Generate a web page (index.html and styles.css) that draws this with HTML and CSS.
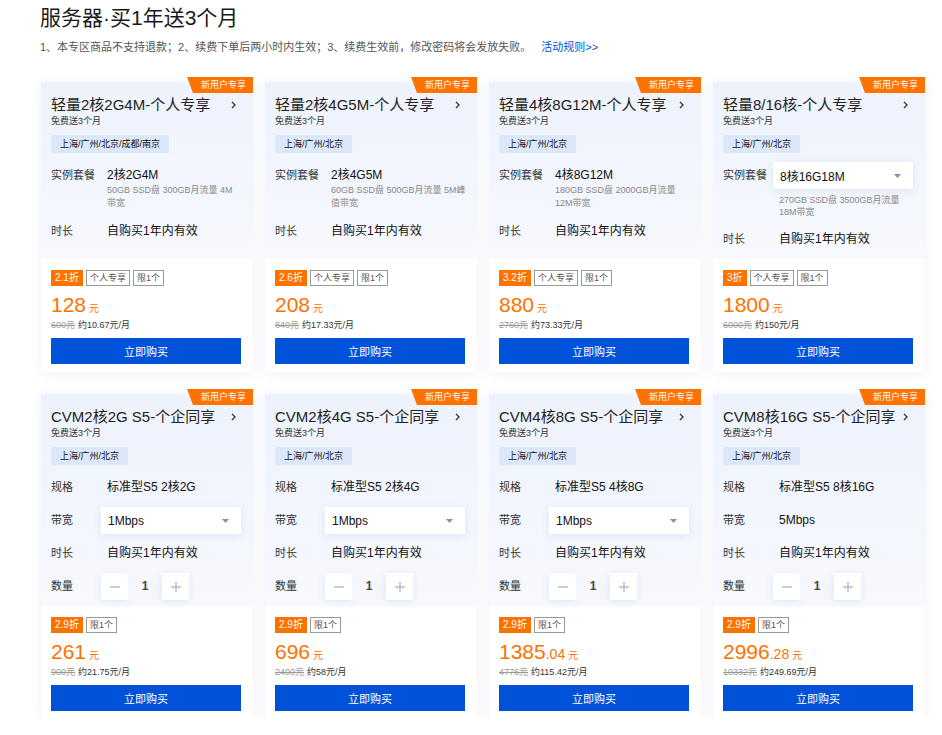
FILE: index.html
```html
<!DOCTYPE html>
<html lang="zh-CN">
<head>
  <meta charset="UTF-8" />
  <meta name="viewport" content="width=device-width, initial-scale=1.0"/>
  <title>服务器·买1年送3个月</title>
  <link rel="stylesheet" href="styles.css">
</head>
<body>

<div class="page-head">
  <h1 class="page-title">服务器·买1年送3个月</h1>
  <p class="page-tips">1、本专区商品不支持退款；2、续费下单后两小时内生效；3、续费生效前，修改密码将会发放失败。<a href="#">活动规则&gt;&gt;</a></p>
</div>

<div class="card-list">
  <!-- 轻量 -->
  <div class="card">
    <span class="badge">新用户专享</span>
    <div class="card-top">
      <div class="card-title">
        <h3>轻量2核2G4M-个人专享</h3>
        <svg class="chevron" width="5" height="8" viewBox="0 0 5 8"><path d="M1 1l3 3-3 3" fill="none" stroke="#333" stroke-width="1.3"/></svg>
      </div>
      <div class="card-sub">免费送3个月</div>
      <span class="region">上海/广州/北京/成都/南京</span>
      <div class="spec-list">
        <div class="spec-row">
          <span class="spec-label">实例套餐</span>
          <div class="spec-value">
            <div class="spec-text">2核2G4M</div>
            <div class="spec-desc">50GB SSD盘 300GB月流量 4M 带宽</div>
          </div>
        </div>
        <div class="spec-row">
          <span class="spec-label">时长</span>
          <div class="spec-value"><div class="spec-text">自购买1年内有效</div></div>
        </div>
      </div>
    </div>
    <div class="card-bottom">
      <div class="tags"><span class="tag tag-off">2.1折</span><span class="tag">个人专享</span><span class="tag">限1个</span></div>
      <div class="price">128<span class="unit">元</span></div>
      <div class="price-orig"><del>600元</del>约10.67元/月</div>
      <button type="button" class="buy-btn">立即购买</button>
    </div>
  </div>

  <div class="card">
    <span class="badge">新用户专享</span>
    <div class="card-top">
      <div class="card-title">
        <h3>轻量2核4G5M-个人专享</h3>
        <svg class="chevron" width="5" height="8" viewBox="0 0 5 8"><path d="M1 1l3 3-3 3" fill="none" stroke="#333" stroke-width="1.3"/></svg>
      </div>
      <div class="card-sub">免费送3个月</div>
      <span class="region">上海/广州/北京</span>
      <div class="spec-list">
        <div class="spec-row">
          <span class="spec-label">实例套餐</span>
          <div class="spec-value">
            <div class="spec-text">2核4G5M</div>
            <div class="spec-desc">60GB SSD盘 500GB月流量 5M峰值带宽</div>
          </div>
        </div>
        <div class="spec-row">
          <span class="spec-label">时长</span>
          <div class="spec-value"><div class="spec-text">自购买1年内有效</div></div>
        </div>
      </div>
    </div>
    <div class="card-bottom">
      <div class="tags"><span class="tag tag-off">2.6折</span><span class="tag">个人专享</span><span class="tag">限1个</span></div>
      <div class="price">208<span class="unit">元</span></div>
      <div class="price-orig"><del>840元</del>约17.33元/月</div>
      <button type="button" class="buy-btn">立即购买</button>
    </div>
  </div>

  <div class="card">
    <span class="badge">新用户专享</span>
    <div class="card-top">
      <div class="card-title">
        <h3>轻量4核8G12M-个人专享</h3>
        <svg class="chevron" width="5" height="8" viewBox="0 0 5 8"><path d="M1 1l3 3-3 3" fill="none" stroke="#333" stroke-width="1.3"/></svg>
      </div>
      <div class="card-sub">免费送3个月</div>
      <span class="region">上海/广州/北京</span>
      <div class="spec-list">
        <div class="spec-row">
          <span class="spec-label">实例套餐</span>
          <div class="spec-value">
            <div class="spec-text">4核8G12M</div>
            <div class="spec-desc">180GB SSD盘 2000GB月流量 12M带宽</div>
          </div>
        </div>
        <div class="spec-row">
          <span class="spec-label">时长</span>
          <div class="spec-value"><div class="spec-text">自购买1年内有效</div></div>
        </div>
      </div>
    </div>
    <div class="card-bottom">
      <div class="tags"><span class="tag tag-off">3.2折</span><span class="tag">个人专享</span><span class="tag">限1个</span></div>
      <div class="price">880<span class="unit">元</span></div>
      <div class="price-orig"><del>2760元</del>约73.33元/月</div>
      <button type="button" class="buy-btn">立即购买</button>
    </div>
  </div>

  <div class="card">
    <span class="badge">新用户专享</span>
    <div class="card-top">
      <div class="card-title">
        <h3>轻量8/16核-个人专享</h3>
        <svg class="chevron" width="5" height="8" viewBox="0 0 5 8"><path d="M1 1l3 3-3 3" fill="none" stroke="#333" stroke-width="1.3"/></svg>
      </div>
      <div class="card-sub">免费送3个月</div>
      <span class="region">上海/广州/北京</span>
      <div class="spec-list">
        <div class="spec-row">
          <span class="spec-label">实例套餐</span>
          <div class="spec-value">
            <div class="select">8核16G18M<svg width="7" height="4" viewBox="0 0 7 4"><path d="M0 0h7L3.5 4z" fill="#8a909c"/></svg></div>
            <div class="spec-desc">270GB SSD盘 3500GB月流量 18M带宽</div>
          </div>
        </div>
        <div class="spec-row">
          <span class="spec-label">时长</span>
          <div class="spec-value"><div class="spec-text">自购买1年内有效</div></div>
        </div>
      </div>
    </div>
    <div class="card-bottom">
      <div class="tags"><span class="tag tag-off">3折</span><span class="tag">个人专享</span><span class="tag">限1个</span></div>
      <div class="price">1800<span class="unit">元</span></div>
      <div class="price-orig"><del>6000元</del>约150元/月</div>
      <button type="button" class="buy-btn">立即购买</button>
    </div>
  </div>

  <!-- CVM -->
  <div class="card">
    <span class="badge">新用户专享</span>
    <div class="card-top">
      <div class="card-title">
        <h3>CVM2核2G S5-个企同享</h3>
        <svg class="chevron" width="5" height="8" viewBox="0 0 5 8"><path d="M1 1l3 3-3 3" fill="none" stroke="#333" stroke-width="1.3"/></svg>
      </div>
      <div class="card-sub">免费送3个月</div>
      <span class="region">上海/广州/北京</span>
      <div class="spec-list">
        <div class="spec-row">
          <span class="spec-label">规格</span>
          <div class="spec-value"><div class="spec-text">标准型S5 2核2G</div></div>
        </div>
        <div class="spec-row">
          <span class="spec-label">带宽</span>
          <div class="spec-value">
            <div class="select">1Mbps<svg width="7" height="4" viewBox="0 0 7 4"><path d="M0 0h7L3.5 4z" fill="#8a909c"/></svg></div>
          </div>
        </div>
        <div class="spec-row">
          <span class="spec-label">时长</span>
          <div class="spec-value"><div class="spec-text">自购买1年内有效</div></div>
        </div>
        <div class="spec-row">
          <span class="spec-label">数量</span>
          <div class="spec-value">
            <div class="stepper">
              <span class="stepper-btn"><svg width="10" height="10" viewBox="0 0 10 10"><path d="M0 5h10" stroke="#b4bac6" stroke-width="1.4"/></svg></span>
              <span class="stepper-num">1</span>
              <span class="stepper-btn"><svg width="10" height="10" viewBox="0 0 10 10"><path d="M0 5h10M5 0v10" stroke="#b4bac6" stroke-width="1.4"/></svg></span>
            </div>
          </div>
        </div>
      </div>
    </div>
    <div class="card-bottom">
      <div class="tags"><span class="tag tag-off">2.9折</span><span class="tag">限1个</span></div>
      <div class="price">261<span class="unit">元</span></div>
      <div class="price-orig"><del>900元</del>约21.75元/月</div>
      <button type="button" class="buy-btn">立即购买</button>
    </div>
  </div>

  <div class="card">
    <span class="badge">新用户专享</span>
    <div class="card-top">
      <div class="card-title">
        <h3>CVM2核4G S5-个企同享</h3>
        <svg class="chevron" width="5" height="8" viewBox="0 0 5 8"><path d="M1 1l3 3-3 3" fill="none" stroke="#333" stroke-width="1.3"/></svg>
      </div>
      <div class="card-sub">免费送3个月</div>
      <span class="region">上海/广州/北京</span>
      <div class="spec-list">
        <div class="spec-row">
          <span class="spec-label">规格</span>
          <div class="spec-value"><div class="spec-text">标准型S5 2核4G</div></div>
        </div>
        <div class="spec-row">
          <span class="spec-label">带宽</span>
          <div class="spec-value">
            <div class="select">1Mbps<svg width="7" height="4" viewBox="0 0 7 4"><path d="M0 0h7L3.5 4z" fill="#8a909c"/></svg></div>
          </div>
        </div>
        <div class="spec-row">
          <span class="spec-label">时长</span>
          <div class="spec-value"><div class="spec-text">自购买1年内有效</div></div>
        </div>
        <div class="spec-row">
          <span class="spec-label">数量</span>
          <div class="spec-value">
            <div class="stepper">
              <span class="stepper-btn"><svg width="10" height="10" viewBox="0 0 10 10"><path d="M0 5h10" stroke="#b4bac6" stroke-width="1.4"/></svg></span>
              <span class="stepper-num">1</span>
              <span class="stepper-btn"><svg width="10" height="10" viewBox="0 0 10 10"><path d="M0 5h10M5 0v10" stroke="#b4bac6" stroke-width="1.4"/></svg></span>
            </div>
          </div>
        </div>
      </div>
    </div>
    <div class="card-bottom">
      <div class="tags"><span class="tag tag-off">2.9折</span><span class="tag">限1个</span></div>
      <div class="price">696<span class="unit">元</span></div>
      <div class="price-orig"><del>2400元</del>约58元/月</div>
      <button type="button" class="buy-btn">立即购买</button>
    </div>
  </div>

  <div class="card">
    <span class="badge">新用户专享</span>
    <div class="card-top">
      <div class="card-title">
        <h3>CVM4核8G S5-个企同享</h3>
        <svg class="chevron" width="5" height="8" viewBox="0 0 5 8"><path d="M1 1l3 3-3 3" fill="none" stroke="#333" stroke-width="1.3"/></svg>
      </div>
      <div class="card-sub">免费送3个月</div>
      <span class="region">上海/广州/北京</span>
      <div class="spec-list">
        <div class="spec-row">
          <span class="spec-label">规格</span>
          <div class="spec-value"><div class="spec-text">标准型S5 4核8G</div></div>
        </div>
        <div class="spec-row">
          <span class="spec-label">带宽</span>
          <div class="spec-value">
            <div class="select">1Mbps<svg width="7" height="4" viewBox="0 0 7 4"><path d="M0 0h7L3.5 4z" fill="#8a909c"/></svg></div>
          </div>
        </div>
        <div class="spec-row">
          <span class="spec-label">时长</span>
          <div class="spec-value"><div class="spec-text">自购买1年内有效</div></div>
        </div>
        <div class="spec-row">
          <span class="spec-label">数量</span>
          <div class="spec-value">
            <div class="stepper">
              <span class="stepper-btn"><svg width="10" height="10" viewBox="0 0 10 10"><path d="M0 5h10" stroke="#b4bac6" stroke-width="1.4"/></svg></span>
              <span class="stepper-num">1</span>
              <span class="stepper-btn"><svg width="10" height="10" viewBox="0 0 10 10"><path d="M0 5h10M5 0v10" stroke="#b4bac6" stroke-width="1.4"/></svg></span>
            </div>
          </div>
        </div>
      </div>
    </div>
    <div class="card-bottom">
      <div class="tags"><span class="tag tag-off">2.9折</span><span class="tag">限1个</span></div>
      <div class="price">1385<small>.04</small><span class="unit">元</span></div>
      <div class="price-orig"><del>4776元</del>约115.42元/月</div>
      <button type="button" class="buy-btn">立即购买</button>
    </div>
  </div>

  <div class="card">
    <span class="badge">新用户专享</span>
    <div class="card-top">
      <div class="card-title">
        <h3>CVM8核16G S5-个企同享</h3>
        <svg class="chevron" width="5" height="8" viewBox="0 0 5 8"><path d="M1 1l3 3-3 3" fill="none" stroke="#333" stroke-width="1.3"/></svg>
      </div>
      <div class="card-sub">免费送3个月</div>
      <span class="region">上海/广州/北京</span>
      <div class="spec-list">
        <div class="spec-row">
          <span class="spec-label">规格</span>
          <div class="spec-value"><div class="spec-text">标准型S5 8核16G</div></div>
        </div>
        <div class="spec-row">
          <span class="spec-label">带宽</span>
          <div class="spec-value"><div class="spec-text">5Mbps</div></div>
        </div>
        <div class="spec-row">
          <span class="spec-label">时长</span>
          <div class="spec-value"><div class="spec-text">自购买1年内有效</div></div>
        </div>
        <div class="spec-row">
          <span class="spec-label">数量</span>
          <div class="spec-value">
            <div class="stepper">
              <span class="stepper-btn"><svg width="10" height="10" viewBox="0 0 10 10"><path d="M0 5h10" stroke="#b4bac6" stroke-width="1.4"/></svg></span>
              <span class="stepper-num">1</span>
              <span class="stepper-btn"><svg width="10" height="10" viewBox="0 0 10 10"><path d="M0 5h10M5 0v10" stroke="#b4bac6" stroke-width="1.4"/></svg></span>
            </div>
          </div>
        </div>
      </div>
    </div>
    <div class="card-bottom">
      <div class="tags"><span class="tag tag-off">2.9折</span><span class="tag">限1个</span></div>
      <div class="price">2996<small>.28</small><span class="unit">元</span></div>
      <div class="price-orig"><del>10332元</del>约249.69元/月</div>
      <button type="button" class="buy-btn">立即购买</button>
    </div>
  </div>
</div>

</body>
</html>
```

FILE: styles.css
```css
* {
  box-sizing: border-box;
}

body {
  margin: 0;
  font-family: "Liberation Sans", "Noto Sans CJK SC", sans-serif;
  color: #333;
  background: #fff;
}

.page-head {
  padding: 6px 0 0 40px;
}

.page-title {
  margin: 0;
  font-size: 21px;
  line-height: 24px;
  font-weight: normal;
  color: #1a1a1a;
}

.page-tips {
  margin: 9px 0 0;
  font-size: 11px;
  line-height: 16px;
  color: #555;
}

.page-tips a {
  margin-left: 10px;
  color: #0052d9;
  text-decoration: none;
}

.card-list {
  display: grid;
  grid-template-columns: repeat(4, 212px);
  column-gap: 12px;
  row-gap: 22px;
  margin-top: 27px;
  padding-left: 41px;
}

.card {
  position: relative;
  display: flex;
  flex-direction: column;
  background: #fff;
  box-shadow: 0 2px 12px rgba(40, 80, 160, 0.08);
}

.badge {
  position: absolute;
  top: -5px;
  right: 0;
  width: 66px;
  height: 16px;
  padding-left: 14px;
  background: #ff7200;
  color: #fff;
  font-size: 9px;
  line-height: 16px;
  clip-path: polygon(0 0, 100% 0, 100% 100%, 6px 100%);
}

.card-top {
  flex: 1;
  padding: 14px 12px 6px 10px;
  background: linear-gradient(180deg, #edf2fc 0%, #f7f9fe 100%);
}

.card-title {
  display: flex;
  justify-content: space-between;
  align-items: center;
}

.card-title h3 {
  margin: 0;
  font-size: 15px;
  line-height: 18px;
  font-weight: normal;
  color: #222;
}

.chevron {
  margin-right: 5px;
}

.card-sub {
  font-size: 9px;
  line-height: 14px;
  color: #333;
}

.region {
  display: inline-block;
  margin-top: 7px;
  height: 18px;
  padding: 0 9px;
  background: #dce7fc;
  font-size: 9px;
  line-height: 18px;
  color: #111;
}

.spec-list {
  display: flex;
  flex-direction: column;
  gap: 6px;
  margin-top: 9px;
}

.spec-row {
  display: flex;
  align-items: flex-start;
}

.spec-label {
  flex: none;
  width: 50px;
  font-size: 11px;
  line-height: 27px;
  color: #333;
}

.spec-value {
  flex: 1;
  min-width: 0;
}

.spec-text {
  padding: 5px 0 0 6px;
  font-size: 12px;
  line-height: 17px;
  color: #111;
}

.spec-desc {
  margin: 0 -3px 2px 0;
  padding-left: 6px;
  font-size: 9px;
  line-height: 13px;
  color: #888;
}

.select {
  display: flex;
  justify-content: space-between;
  align-items: center;
  height: 27px;
  padding: 0 12px 0 7px;
  background: #fff;
  box-shadow: 0 2px 8px rgba(40, 80, 160, 0.1);
  font-size: 12px;
  color: #111;
}

.select + .spec-desc {
  margin-top: 5px;
  line-height: 12px;
}

.stepper {
  display: flex;
  height: 27px;
}

.stepper-btn {
  display: flex;
  justify-content: center;
  align-items: center;
  width: 27px;
  background: #fff;
  box-shadow: 0 2px 8px rgba(40, 80, 160, 0.1);
  cursor: pointer;
}

.stepper-num {
  width: 34px;
  background: #f5f7fd;
  text-align: center;
  font-size: 12px;
  font-weight: bold;
  line-height: 27px;
  color: #444;
}

.card-bottom {
  padding: 11px 12px 8px 10px;
}

.tags {
  display: flex;
  gap: 3px;
}

.tag {
  height: 16px;
  padding: 0 3px;
  border: 1px solid #999;
  font-size: 9px;
  line-height: 14px;
  color: #555;
}

.tag-off {
  border-color: #ff7200;
  background: #ff7200;
  color: #fff;
  font-size: 10px;
}

.price {
  margin-top: 6px;
  font-size: 21px;
  line-height: 26px;
  color: #ff7200;
}

.price small,
.price .unit {
  line-height: 0;
}

.price small {
  font-size: 14px;
}

.price .unit {
  margin-left: 3px;
  font-size: 10px;
}

.price-orig {
  font-size: 9px;
  line-height: 14px;
  color: #333;
}

.price-orig del {
  margin-right: 3px;
  color: #999;
}

.buy-btn {
  display: block;
  width: 100%;
  height: 26px;
  margin-top: 6px;
  border: none;
  background: #0052d9;
  color: #fff;
  font-family: inherit;
  font-size: 11px;
  cursor: pointer;
}
```
